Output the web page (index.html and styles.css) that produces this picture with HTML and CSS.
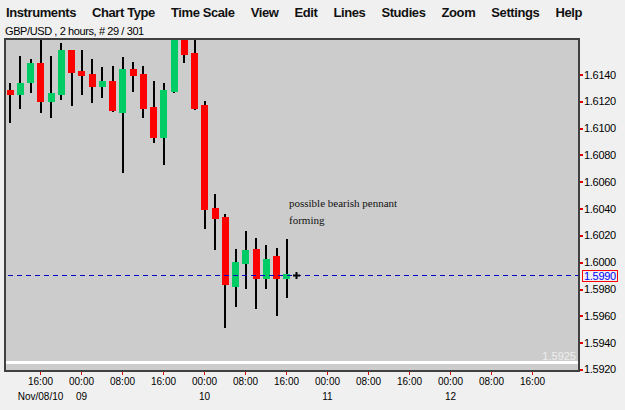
FILE: index.html
```html
<!DOCTYPE html>
<html lang="en">
<head>
    <meta charset="UTF-8">
    <title>GBP/USD - 2 hours</title>
    <link rel="stylesheet" href="styles.css">
</head>
<body>
    <div class="menu-bar">
        <span class="menu-item">Instruments</span>
        <span class="menu-item">Chart Type</span>
        <span class="menu-item">Time Scale</span>
        <span class="menu-item">View</span>
        <span class="menu-item">Edit</span>
        <span class="menu-item">Lines</span>
        <span class="menu-item">Studies</span>
        <span class="menu-item">Zoom</span>
        <span class="menu-item">Settings</span>
        <span class="menu-item">Help</span>
    </div>

    <div class="chart-info">GBP/USD , 2 hours, # 29 / 301</div>

    <div class="chart-row">
        <div class="plot">
            <svg id="plot" width="572" height="330">
                <g id="candles"></g>
                <rect class="floor-line" x="0" y="321" width="572" height="3"></rect>
                <text class="floor-label" x="570" y="320">1.5925</text>
                <line class="price-line" x1="2" y1="235.5" x2="572" y2="235.5"></line>
                <line class="cursor" x1="287" y1="235.5" x2="294" y2="235.5"></line>
                <line class="cursor" x1="290.5" y1="232" x2="290.5" y2="239"></line>
                <text class="note" x="283" y="167">possible bearish pennant</text>
                <text class="note" x="283" y="183.5">forming</text>
            </svg>
        </div>
        <div class="price-axis">
            <div class="price"><span class="tick"></span>1.6140</div>
            <div class="price"><span class="tick"></span>1.6120</div>
            <div class="price"><span class="tick"></span>1.6100</div>
            <div class="price"><span class="tick"></span>1.6080</div>
            <div class="price"><span class="tick"></span>1.6060</div>
            <div class="price"><span class="tick"></span>1.6040</div>
            <div class="price"><span class="tick"></span>1.6020</div>
            <div class="price"><span class="tick"></span>1.6000</div>
            <div class="price"><span class="tick"></span>1.5980</div>
            <div class="price"><span class="tick"></span>1.5960</div>
            <div class="price"><span class="tick"></span>1.5940</div>
            <div class="price"><span class="tick"></span>1.5920</div>
            <div class="last-price">1.5990</div>
        </div>
    </div>

    <div class="time-axis">
        <div class="time"><span class="tick"></span><span>16:00</span><span class="date">Nov/08/10</span></div>
        <div class="time"><span class="tick"></span><span>00:00</span><span class="date">09</span></div>
        <div class="time"><span class="tick"></span><span>08:00</span></div>
        <div class="time"><span class="tick"></span><span>16:00</span></div>
        <div class="time"><span class="tick"></span><span>00:00</span><span class="date">10</span></div>
        <div class="time"><span class="tick"></span><span>08:00</span></div>
        <div class="time"><span class="tick"></span><span>16:00</span></div>
        <div class="time"><span class="tick"></span><span>00:00</span><span class="date">11</span></div>
        <div class="time"><span class="tick"></span><span>08:00</span></div>
        <div class="time"><span class="tick"></span><span>16:00</span></div>
        <div class="time"><span class="tick"></span><span>00:00</span><span class="date">12</span></div>
        <div class="time"><span class="tick"></span><span>08:00</span></div>
        <div class="time"><span class="tick"></span><span>16:00</span></div>
    </div>

    <script src="script.js"></script>
</body>
</html>
```

FILE: styles.css
```css
body {
    margin: 0;
    height: 410px;
    overflow: hidden;
    background: #f0f0f0;
    font-family: "Liberation Sans", Arial, sans-serif;
    color: #000;
}

.menu-bar {
    height: 25px;
    display: flex;
    align-items: center;
    gap: 16px;
    padding-left: 6px;
    font-size: 13px;
    font-weight: bold;
    letter-spacing: -0.4px;
    color: #111;
}

.chart-info {
    height: 13px;
    line-height: 13px;
    padding-left: 5px;
    font-size: 11px;
    letter-spacing: -0.4px;
}

.chart-row {
    display: flex;
    height: 334px;
    padding-left: 4px;
}

.plot {
    width: 572px;
    height: 330px;
    border: 2px solid #404040;
    background: #cccccc;
}

.plot svg {
    display: block;
}

.floor-line {
    fill: #ffffff;
}

.floor-label {
    font: 11px "Liberation Sans", Arial, sans-serif;
    fill: #eeeeee;
    text-anchor: end;
}

.price-line {
    stroke: #0000c8;
    stroke-width: 1;
    stroke-dasharray: 5 4;
}

.cursor {
    stroke: #000;
    stroke-width: 2;
}

.note {
    font: 11px "Liberation Serif", "Times New Roman", serif;
    fill: #111;
}

.price-axis {
    position: relative;
    display: flex;
    flex-direction: column;
    padding-top: 23.6px;
    font-size: 11px;
    letter-spacing: -0.3px;
}

.price {
    height: 26.82px;
    flex-shrink: 0;
    line-height: 11px;
    display: flex;
    align-items: center;
}

.price .tick {
    width: 3px;
    height: 2px;
    margin-right: 1px;
    background: #e00000;
}

.last-price {
    position: absolute;
    top: 232px;
    left: 2px;
    padding: 0 1px;
    line-height: 10px;
    border: 1px solid #ff0000;
    background: #f0f0f0;
    color: #0000ff;
}

.time-axis {
    display: flex;
    padding-left: 20px;
    font-size: 10px;
    line-height: 12px;
}

.time {
    width: 41px;
    flex-shrink: 0;
    display: flex;
    flex-direction: column;
    align-items: center;
}

.time .tick {
    width: 1px;
    height: 3px;
    margin-bottom: 1px;
    background: #e00000;
}

.time .date {
    margin-top: 3px;
    white-space: nowrap;
}
```

FILE: script.js
```js
// GBP/USD 2 hours: [open, high, low, close]
const candles = [
    [1.61288, 1.61340, 1.61042, 1.61251],
    [1.61251, 1.61542, 1.61147, 1.61338],
    [1.61343, 1.61519, 1.61264, 1.61487],
    [1.61487, 1.61676, 1.61117, 1.61201],
    [1.61201, 1.61542, 1.61082, 1.61264],
    [1.61251, 1.61636, 1.61214, 1.61586],
    [1.61586, 1.61586, 1.61171, 1.61417],
    [1.61430, 1.61586, 1.61251, 1.61395],
    [1.61407, 1.61519, 1.61189, 1.61313],
    [1.61313, 1.61457, 1.61231, 1.61355],
    [1.61355, 1.61467, 1.61122, 1.61132],
    [1.61119, 1.61536, 1.60672, 1.61442],
    [1.61442, 1.61495, 1.61276, 1.61395],
    [1.61407, 1.61467, 1.61082, 1.61147],
    [1.61164, 1.61355, 1.60891, 1.60933],
    [1.60933, 1.61343, 1.60730, 1.61288],
    [1.61276, 1.61750, 1.61264, 1.61700],
    [1.61720, 1.61720, 1.61492, 1.61549],
    [1.61566, 1.61720, 1.61139, 1.61145],
    [1.61177, 1.61209, 1.60253, 1.60394],
    [1.60407, 1.60514, 1.60096, 1.60327],
    [1.60344, 1.60362, 1.59513, 1.59834],
    [1.59821, 1.60104, 1.59674, 1.60005],
    [1.59992, 1.60238, 1.59804, 1.60096],
    [1.60104, 1.60184, 1.59655, 1.59883],
    [1.59883, 1.60134, 1.59804, 1.60032],
    [1.60054, 1.60109, 1.59605, 1.59883],
    [1.59883, 1.60176, 1.59741, 1.59918]
];

const topPrice = 1.6140;   // price at y = 35
const pxPerPip = 1.3425;
const step = 10.25;        // one 2h bar

function yOf(p) {
    return 35 + (topPrice - p) * 10000 * pxPerPip;
}

const ns = 'http://www.w3.org/2000/svg';
const group = document.getElementById('candles');

function rect(x, y, w, h, fill) {
    const r = document.createElementNS(ns, 'rect');
    r.setAttribute('x', x);
    r.setAttribute('y', y);
    r.setAttribute('width', w);
    r.setAttribute('height', Math.max(h, 1));
    r.setAttribute('fill', fill);
    group.appendChild(r);
}

candles.forEach(([o, h, l, c], i) => {
    const cx = 4 + i * step;
    const up = c >= o;
    const yHigh = Math.round(yOf(h));
    const yLow = Math.round(yOf(l));
    const yTop = Math.round(yOf(Math.max(o, c)));
    const yBot = Math.round(yOf(Math.min(o, c)));

    rect(Math.round(cx - 1), yHigh, 2, yLow - yHigh, '#000');
    rect(Math.round(cx - 3.5), yTop, 7, yBot - yTop, up ? '#00cc66' : '#ff0000');
});
```
